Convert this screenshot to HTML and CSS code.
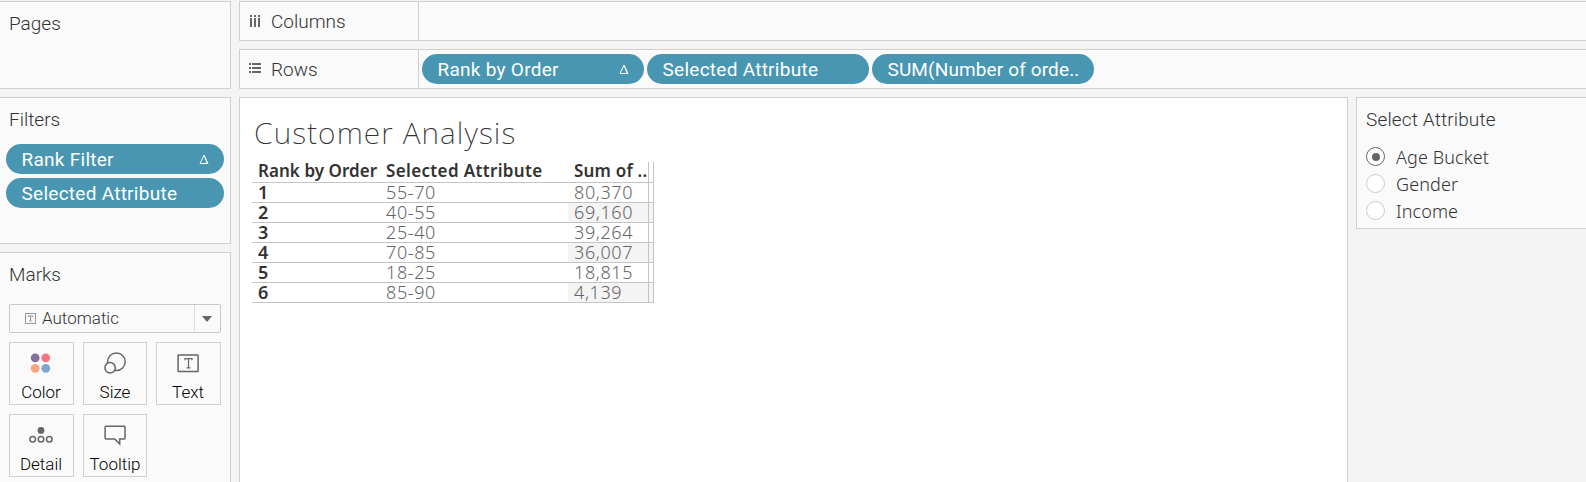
FILE: index.html
```html
<!DOCTYPE html>
<html lang="en">
<head>
<meta charset="utf-8">
<title>Customer Analysis</title>
<link rel="stylesheet" href="styles.css">
</head>
<body>
<div class="workspace">
  <aside class="sidebar">
    <section class="card pages"><h2>Pages</h2></section>
    <section class="card filters">
      <h2>Filters</h2>
      <div class="pill"><span>Rank Filter</span><svg class="delta" width="10" height="11" viewBox="0 0 10 11"><path d="M5 1.2 L9 9.5 H1 Z M5 1.2 L8.4 9.5"/></svg></div>
      <div class="pill"><span>Selected Attribute</span></div>
    </section>
    <section class="card marks">
      <h2>Marks</h2>
      <div class="select">
        <svg class="type-icon" width="11" height="11" viewBox="0 0 11 11"><rect x=".5" y=".5" width="10" height="10"/><path d="M3 4V3h5v1M5.5 3v5M4.3 8h2.4"/></svg>
        <span class="select-label">Automatic</span>
        <span class="caret"><svg width="10" height="6" viewBox="0 0 10 6"><path d="M0 0H10L5 6Z" fill="#666"/></svg></span>
      </div>
      <div class="buttons">
        <div class="btn shifted"><svg width="24" height="24" viewBox="0 0 24 24"><circle cx="6.2" cy="6.8" r="4.4" fill="#866f9b"/><circle cx="16.8" cy="6.8" r="4.4" fill="#f97383"/><circle cx="6.2" cy="17.3" r="4.4" fill="#f4a57b"/><circle cx="16.8" cy="17.3" r="4.4" fill="#7fa4cd"/></svg><span>Color</span></div>
        <div class="btn"><svg class="line" width="24" height="24" viewBox="0 0 24 24"><circle cx="13.4" cy="10.8" r="8.8"/><circle cx="7.1" cy="16.8" r="5.2" fill="#fafafa"/></svg><span>Size</span></div>
        <div class="btn shifted"><svg class="line" width="24" height="24" viewBox="0 0 24 24"><rect x="2.1" y="4.1" width="20" height="16.3" rx=".5"/><path class="thin" d="M9 9.2V7.7h7v1.5M12.5 7.7v9M10.5 16.8h4"/></svg><span>Text</span></div>
        <div class="btn shifted"><svg class="line" width="24" height="24" viewBox="0 0 24 24"><circle cx="12" cy="7.4" r="3.4" fill="#666" stroke="none"/><circle cx="3.7" cy="16.3" r="2.8"/><circle cx="12" cy="16.3" r="2.8"/><circle cx="20.3" cy="16.3" r="2.8"/></svg><span>Detail</span></div>
        <div class="btn"><svg class="line" width="24" height="24" viewBox="0 0 24 24"><path d="M3 3.2H21.1Q22 3.2 22 4.1V15Q22 16 21.1 16H16.7V20.9L11.7 16H3Q2.1 16 2.1 15V4.1Q2.1 3.2 3 3.2Z"/></svg><span>Tooltip</span></div>
      </div>
    </section>
  </aside>
  <main class="main">
    <div class="shelf">
      <div class="shelf-name"><svg width="12" height="12" viewBox="0 0 12 12" fill="#666"><path d="M1 0h2v2H1zM5 0h2v2H5zM9 0h2v2H9zM1 3h2v9H1zM5 3h2v9H5zM9 3h2v9H9z"/></svg><span>Columns</span></div>
    </div>
    <div class="shelf">
      <div class="shelf-name"><svg width="12" height="12" viewBox="0 0 12 12" fill="#666"><path d="M0 0h2v2H0zM3 0h9v2H3zM0 4h2v2H0zM3 4h9v2H3zM0 8h2v2H0zM3 8h9v2H3z"/></svg><span>Rows</span></div>
      <div class="shelf-pills">
        <div class="pill"><span>Rank by Order</span><svg class="delta" width="10" height="11" viewBox="0 0 10 11"><path d="M5 1.2 L9 9.5 H1 Z M5 1.2 L8.4 9.5"/></svg></div>
        <div class="pill"><span>Selected Attribute</span></div>
        <div class="pill"><span class="measure">SUM(Number of orde..</span></div>
      </div>
    </div>
    <div class="view">
      <div class="canvas">
        <h1>Customer Analysis</h1>
        <div class="table">
          <div class="row head"><span class="h-rank">Rank by Order</span><span>Selected Attribute</span><span class="h-sum">Sum of ..</span><i></i></div>
          <div class="row"><b>1</b><span>55-70</span><span>80,370</span><i></i></div>
          <div class="row band"><b>2</b><span>40-55</span><span>69,160</span><i></i></div>
          <div class="row"><b>3</b><span>25-40</span><span>39,264</span><i></i></div>
          <div class="row band"><b>4</b><span>70-85</span><span>36,007</span><i></i></div>
          <div class="row"><b>5</b><span>18-25</span><span>18,815</span><i></i></div>
          <div class="row band"><b>6</b><span>85-90</span><span>4,139</span><i></i></div>
        </div>
      </div>
      <div class="card parameter">
        <h2>Select Attribute</h2>
        <div class="option on"><i></i><span>Age Bucket</span></div>
        <div class="option"><i></i><span>Gender</span></div>
        <div class="option"><i></i><span>Income</span></div>
      </div>
    </div>
  </main>
</div>
</body>
</html>
```
FILE: styles.css
```css
* { box-sizing: border-box; }
body { margin: 0; background: #f4f4f4; font-family: Roboto, "Liberation Sans", sans-serif; color: #333; overflow: hidden; }
h1, h2 { margin: 0; font-weight: 300; }
i { font-style: normal; }
.workspace { display: flex; gap: 8px; height: 482px; padding-top: 1px; }
.sidebar { display: flex; flex-direction: column; gap: 8px; width: 231px; flex: none; }
.card { background: #fafafa; border: 1px solid #d0d0d0; }
.sidebar .card { border-left: 0; }
.card h2 { font-size: 19px; line-height: 24px; letter-spacing: 0; padding-left: 9px; }
.pages { flex: none; height: 88px; padding-top: 10px; }
.filters { flex: none; height: 147px; padding-top: 10px; }
.filters h2 { margin-bottom: 12px; }
.marks { flex: 1; border-bottom: 0; padding-top: 10px; }
.pill { display: flex; align-items: center; justify-content: space-between; height: 30px; padding: 0 15px 0 15.5px; border-radius: 15px; background: #4996b2; color: #fff; font-size: 19px; line-height: 30px; letter-spacing: .27px; white-space: nowrap; }
.pill span { padding-top: 1px; }
.measure { letter-spacing: .13px; }
.filters .pill { width: 218px; margin: 0 0 4px 6px; }
.delta { fill: none; stroke: #fff; stroke-width: 1; }
.select { display: flex; align-items: center; width: 212px; height: 29px; margin: 17px 0 9px 9px; border: 1px solid #c8c8c8; border-radius: 2px; }
.type-icon { margin: 0 0 1px 14.5px; fill: none; stroke: #999; }
.select-label { margin-left: 6.5px; padding-bottom: 2px; flex: 1; font-size: 17px; font-weight: 300; }
.caret { display: flex; align-items: center; justify-content: center; width: 26px; height: 100%; padding-right: 1px; border-left: 1px solid #ddd; }
.buttons { display: grid; grid-template-columns: 65px 64px 65px; gap: 9px; margin-left: 9px; width: 212px; }
.btn { display: flex; flex-direction: column; align-items: center; height: 63px; padding-top: 8px; border: 1px solid #d0d0d0; color: #000; font-size: 17px; font-weight: 300; line-height: 20px; }
.shifted { padding-right: 1px; }
.btn svg { flex: none; margin-bottom: 7px; }
.line { fill: none; stroke: #666; stroke-width: 1.5; }
.thin { stroke-width: 1.2; }
.main { flex: 1; display: flex; flex-direction: column; gap: 8px; min-width: 0; }
.shelf { display: flex; height: 40px; background: #fafafa; border: 1px solid #d0d0d0; border-right: 0; flex: none; }
.shelf-name { display: flex; align-items: center; gap: 10px; width: 179px; padding-left: 9px; border-right: 1px solid #d0d0d0; font-size: 19px; font-weight: 300; }
.shelf-pills { display: flex; gap: 3px; padding: 4px 3px; }
.shelf-pills .pill { width: 222px; }
.view { flex: 1; display: flex; gap: 8px; align-items: flex-start; }
.canvas { width: 1109px; height: 385px; padding: 15px 0 0 12px; background: #fff; border: 1px solid #d0d0d0; border-bottom: 0; font-family: "Noto Sans", "Open Sans", sans-serif; }
h1 { font-size: 30px; font-weight: 200; line-height: 40px; margin-left: 2px; letter-spacing: 1.1px; }
.table { width: 402px; margin-top: 9px; font-size: 18px; }
.row { display: grid; grid-template-columns: 128px 188px 81px 5px; height: 20px; line-height: 19px; border-bottom: 1px solid #c4c4c4; font-weight: 300; color: #666; letter-spacing: .6px; white-space: nowrap; }
.row > :first-child, .row > :nth-child(2), .row > :nth-child(3) { padding-left: 6px; }
.row > :nth-child(3), .row > i { border-right: 1px solid #c4c4c4; }
.row b { font-weight: 600; color: #333; }
.row.head { height: 21px; line-height: 18px; font-weight: 600; color: #333; font-size: 17px; letter-spacing: .35px; }
.head .h-rank { letter-spacing: .05px; }
.head .h-sum { letter-spacing: .2px; }
.band > :nth-child(3), .band > i { background: #f4f4f4; }
.parameter { flex: 1; height: 132px; padding-top: 10px; border-right: 0; }
.parameter h2 { margin-bottom: 11px; letter-spacing: .15px; }
.option { display: flex; align-items: center; gap: 11px; height: 27px; padding-left: 9px; font-family: "Noto Sans", sans-serif; font-size: 18px; font-weight: 300; letter-spacing: .1px; }
.option i { display: grid; place-items: center; width: 19px; height: 19px; border: 1px solid #ccc; border-radius: 50%; background: #fff; }
.option.on i { border-color: #666; }
.option.on i::after { content: ""; width: 8px; height: 8px; border-radius: 50%; background: #666; }
```
